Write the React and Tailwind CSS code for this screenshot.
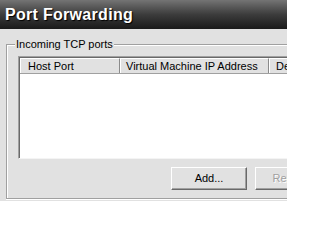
export default function App() {
  const ui = "font-['Tahoma','Liberation_Sans',sans-serif]";

  return (
    <div className={`w-[287px] h-[201px] overflow-hidden bg-[#e1e1e1] text-[11px] text-black ${ui}`}>
      {/* title bar */}
      <div className="h-[29px] flex items-center pl-[5px] pt-[1px] bg-gradient-to-b from-[#747474] via-[#3c3c3c] to-[#1a1a1a]">
        <span className="text-white font-bold text-[16px] leading-none tracking-[0.3px] [text-shadow:1px_1px_1px_#000] font-['Liberation_Sans',sans-serif]">
          Port Forwarding
        </span>
      </div>

      {/* group box */}
      <div className="pl-[6px] pt-[15px]">
        <div className="relative w-[400px] h-[155px] border border-[#a0a0a0] shadow-[inset_1px_1px_0_#fff,0_1px_0_#fff] pl-[11px] pt-[11px]">
          <span className="absolute -top-[8px] left-[8px] bg-[#e1e1e1] px-[1px] leading-[14px]">
            Incoming TCP ports
          </span>

          {/* list view */}
          <div className="h-[103px] border border-[#a0a0a0] border-b-[#f4f4f4] border-r-[#f4f4f4] bg-white shadow-[inset_1px_1px_0_#696969]">
            <div className="flex h-[16px] ml-[1px] mt-[1px] border-b border-[#a0a0a0] bg-[#e1e1e1]">
              <div className="w-[100px] pl-[7px] leading-[15px] border-l border-t border-white border-r border-r-[#8a8a8a]">
                Host Port
              </div>
              <div className="w-[149px] pl-[5px] leading-[15px] border-l border-t border-white border-r border-r-[#8a8a8a]">
                Virtual Machine IP Address
              </div>
              <div className="w-[120px] pl-[6px] leading-[15px] border-l border-t border-white">
                Destination Port
              </div>
            </div>
          </div>

          {/* buttons */}
          <div className="flex gap-[8px] mt-[8px] ml-[153px]">
            <button className="w-[76px] h-[23px] bg-[#e1e1e1] border border-t-white border-l-white border-b-[#696969] border-r-[#696969] shadow-[inset_-1px_-1px_0_#a0a0a0]">
              Add...
            </button>
            <button
              disabled
              className="w-[76px] h-[23px] bg-[#e1e1e1] text-[#a0a0a0] [text-shadow:1px_1px_0_#fff] border border-t-white border-l-white border-b-[#696969] border-r-[#696969] shadow-[inset_-1px_-1px_0_#a0a0a0]"
            >
              Remove
            </button>
          </div>
        </div>
      </div>
    </div>
  );
}
